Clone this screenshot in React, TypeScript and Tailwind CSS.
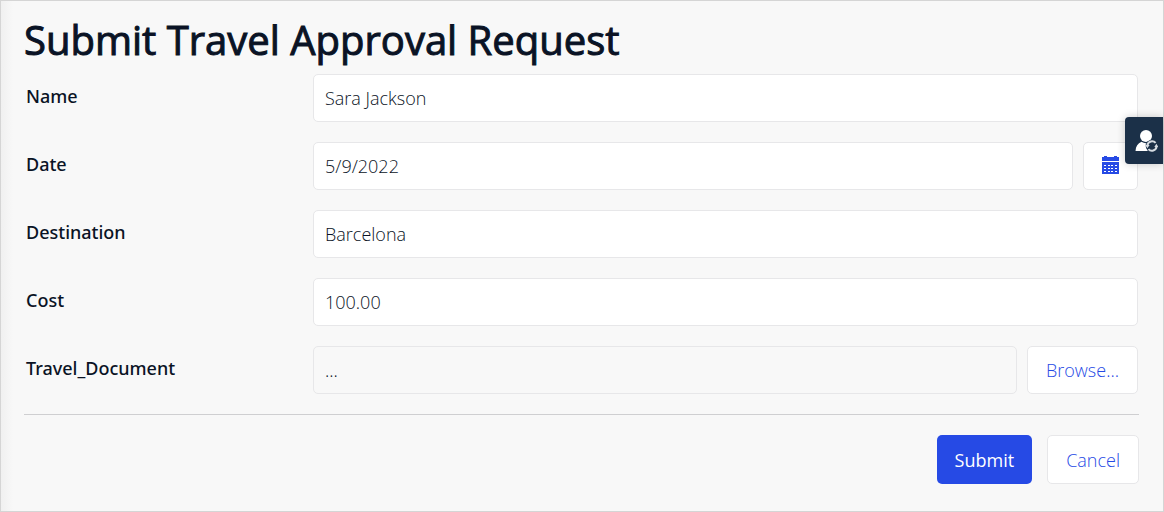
import type { ReactNode } from "react";

const boxClass =
  "h-12 w-full min-w-0 flex-1 rounded-[5px] border border-[#e7e7e9] bg-white px-[11px] text-lg font-light text-[#0a1325] outline-none focus:border-[#264ae5] read-only:bg-[#f8f8f8]";

const outlineButtonClass =
  "flex shrink-0 items-center justify-center rounded-[5px] border border-[#e7e7e9] bg-white text-lg font-light text-[#264ae5]";

function Row({ id, label, children }: { id: string; label: string; children: ReactNode }) {
  return (
    <div className="flex items-start">
      <label htmlFor={id} className="w-[287px] shrink-0 pt-2 font-['Noto_Sans','Open_Sans',sans-serif] text-lg font-medium">
        {label}
      </label>
      <div className="flex min-w-0 flex-1 gap-[10px]">{children}</div>
    </div>
  );
}

function CalendarIcon() {
  return (
    <svg width="17" height="20" viewBox="0 0 17 20" fill="#264ae5" shapeRendering="crispEdges" aria-hidden="true">
      <path d="M0 1h2V0h3v1h7V0h3v1h2v4H0z" />
      <path d="M0 6h17v12H0z" />
      <path
        d="M2 9h2v1H2zM6 9h2v1H6zM9 9h2v1H9zM13 9h2v1h-2zM2 12h2v1H2zM6 12h2v1H6zM9 12h2v1H9zM13 12h2v1h-2zM2 15h2v1H2zM6 15h2v1H6zM9 15h2v1H9zM13 15h2v1h-2z"
        fill="#fff"
      />
    </svg>
  );
}

function SwitchUserIcon() {
  return (
    <svg width="24" height="24" viewBox="0 0 24 24" fill="none" aria-hidden="true">
      <circle cx="12" cy="7" r="6" fill="#fff" />
      <path d="M1.500 22c.3-4.500 2.200-7.500 6-9.200 2.500 1.700 6 1.900 8.500.2l3 9z" fill="#fff" />
      <circle cx="18" cy="17" r="6.300" fill="#1b3048" />
      <path d="M13.400 16.300a4.700 4.700 0 0 1 8.200-2.400M22.600 17.700a4.700 4.700 0 0 1-8.200 2.400" stroke="#d5dbe1" strokeWidth="2" />
      <path d="M11.300 16h4.400l-2.400 3.200zM20.300 18h4l-1.900-3.200z" fill="#d5dbe1" />
    </svg>
  );
}

export default function App() {
  return (
    <main className="relative min-h-screen border border-[#d5d5d5] bg-[#f8f8f8] bg-[linear-gradient(to_right,#f0f0f0,#f8f8f8_12px)] pr-6 pl-[23px] pt-[15px] pb-6 font-['Open_Sans','Noto_Sans',sans-serif] text-[#0a1325]">
      <h1 className="text-[40px] leading-[48px] font-normal [-webkit-text-stroke:1px_#0a1325]">
        Submit Travel Approval Request
      </h1>
      <form onSubmit={(event) => event.preventDefault()}>
        <div className="flex flex-col gap-5 border-b border-[#cfcfd1] pr-px pl-[2px] pt-[10px] pb-5">
          <Row id="name" label="Name">
            <input id="name" type="text" defaultValue="Sara Jackson" className={boxClass} />
          </Row>
          <Row id="date" label="Date">
            <input id="date" type="text" defaultValue="5/9/2022" className={boxClass} />
            <button type="button" aria-label="Choose date" className={`${outlineButtonClass} h-12 w-[55px]`}>
              <CalendarIcon />
            </button>
          </Row>
          <Row id="destination" label="Destination">
            <input id="destination" type="text" defaultValue="Barcelona" className={boxClass} />
          </Row>
          <Row id="cost" label="Cost">
            <input id="cost" type="text" defaultValue="100.00" className={boxClass} />
          </Row>
          <Row id="document" label="Travel_Document">
            <input id="document" type="text" readOnly defaultValue="..." className={boxClass} />
            <button type="button" className={`${outlineButtonClass} h-12 px-[18px]`}>
              Browse...
            </button>
          </Row>
        </div>
        <div className="flex justify-end gap-[15px] pt-5">
          <button
            type="submit"
            className="h-[49px] rounded-[5px] bg-[#264ae5] px-[18px] text-lg font-normal text-white"
          >
            Submit
          </button>
          <button type="button" className={`${outlineButtonClass} h-[49px] px-[18px]`}>
            Cancel
          </button>
        </div>
      </form>
      <button
        type="button"
        aria-label="Switch user"
        className="absolute top-[116px] right-0 flex h-[47px] w-[38px] items-center justify-center rounded-l-[4px] bg-[#1b3048] pl-1 shadow-[0_0_8px_rgba(0,0,0,0.2)]"
      >
        <SwitchUserIcon />
      </button>
    </main>
  );
}
